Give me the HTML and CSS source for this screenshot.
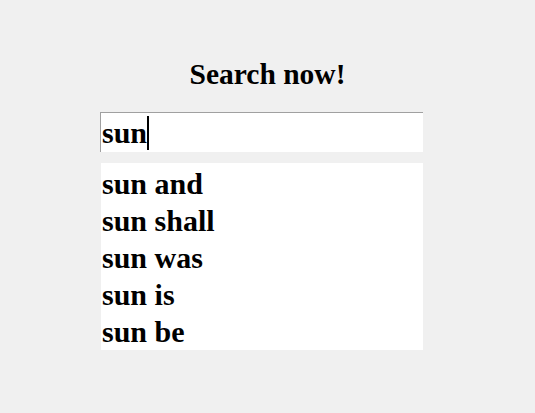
FILE: index.html
```html
<!DOCTYPE html>
<html>
<head>
<meta charset="utf-8">
<link rel="stylesheet" href="styles.css">
</head>
<body>
<div class="page">
  <h1 class="title">Search now!</h1>
  <div class="search">
    <div class="field"><span class="typed">sun</span><span class="caret"></span></div>
    <ul class="suggestions">
      <li>sun and</li>
      <li>sun shall</li>
      <li>sun was</li>
      <li>sun is</li>
      <li>sun be</li>
    </ul>
  </div>
</div>
</body>
</html>
```
FILE: styles.css
```css
html, body {
  margin: 0;
  padding: 0;
  background: #f0f0f0;
}
body {
  font-family: "Liberation Serif", "Times New Roman", serif;
  font-weight: bold;
  color: #000;
}
.page {
  padding-top: 56px;
}
.title {
  margin: 0;
  text-align: center;
  font-size: 29.5px;
  line-height: 36px;
}
.search {
  margin: 20px 0 0 100px;
  width: 323px;
}
.field {
  height: 39px;
  background: #fff;
  border-top: 1px solid #a0a0a0;
  border-left: 1px solid #a0a0a0;
  display: flex;
  align-items: center;
  padding-left: 1px;
  font-size: 30px;
  line-height: 39px;
}
.caret {
  display: inline-block;
  width: 2px;
  height: 34px;
  background: #000;
  margin-top: 1px;
}
.suggestions {
  list-style: none;
  margin: 11px 0 0 1px;
  padding: 2px 0 0 1px;
  height: 185px;
  background: #fff;
  font-size: 30px;
}
.suggestions li {
  line-height: 37px;
  height: 37px;
}
```
